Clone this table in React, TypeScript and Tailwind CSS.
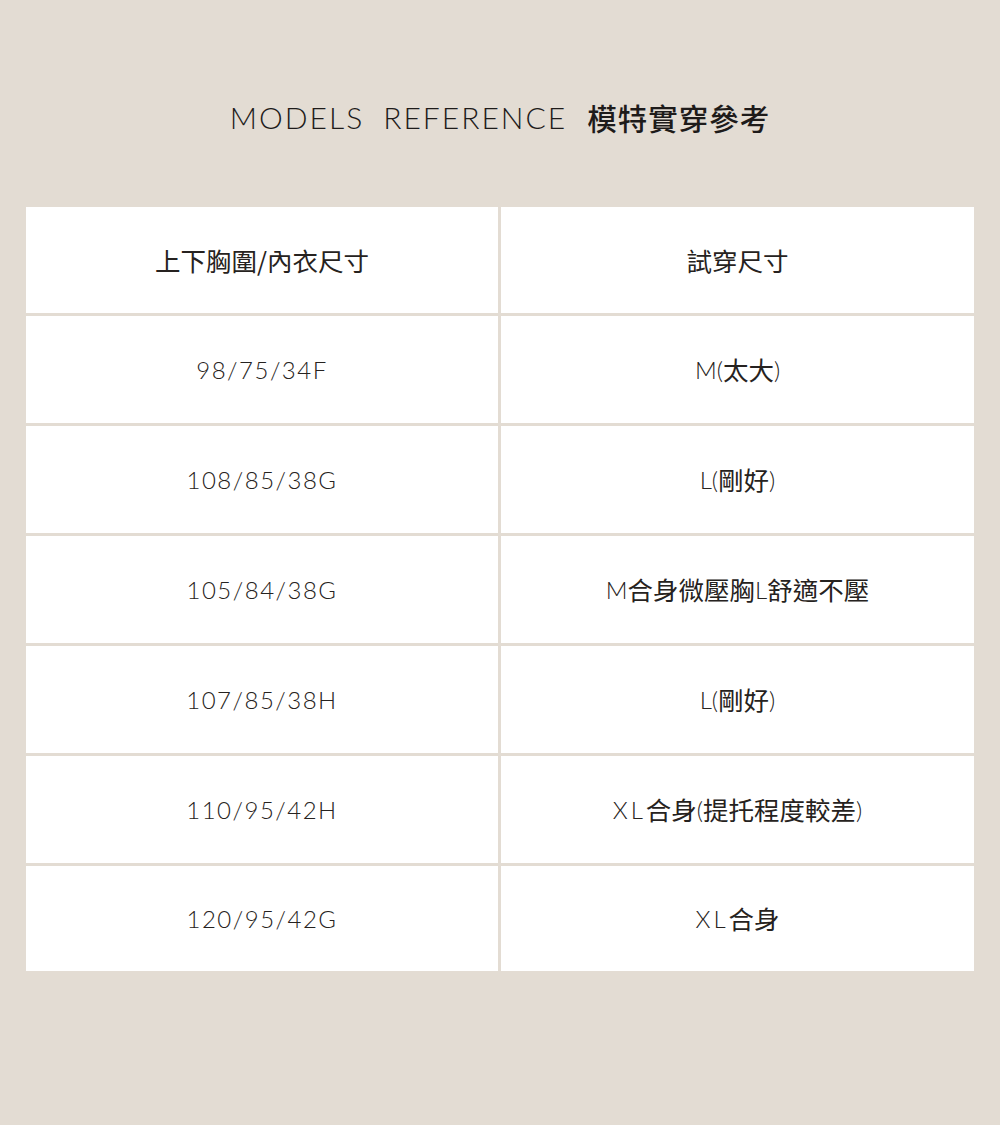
import React from "react";

const rows: [string, React.ReactNode][] = [
  ["98/75/34F", <><L>M(</L><C>太大</C><L>)</L></>],
  ["108/85/38G", <><L>L(</L><C>剛好</C><L>)</L></>],
  ["105/84/38G", <><L>M</L><C>合身微壓胸</C><L>L</L><C>舒適不壓</C></>],
  ["107/85/38H", <><L>L(</L><C>剛好</C><L>)</L></>],
  ["110/95/42H", <><L className="tracking-[3px]">XL</L><C>合身</C><L>(</L><C>提托程度較差</C><L>)</L></>],
  ["120/95/42G", <><L className="tracking-[3px]">XL</L><C>合身</C></>],
];

function L({ children, className = "" }: { children: React.ReactNode; className?: string }) {
  return (
    <span
      className={"font-light text-[24px] " + className}
      style={{ fontFamily: '"Lato", "Liberation Sans", sans-serif' }}
    >
      {children}
    </span>
  );
}

function C({ children }: { children: React.ReactNode }) {
  return (
    <span
      className="font-normal text-[25.5px]"
      style={{ fontFamily: '"Noto Sans CJK TC", "Noto Sans CJK SC", sans-serif' }}
    >
      {children}
    </span>
  );
}

export default function App() {
  return (
    <div className="w-[1000px] h-[1125px] bg-[#e3dcd3] text-[#262220]">
      <div className="h-[207px] flex justify-center items-start pt-[95px]">
        <div className="flex items-center gap-[20px]">
          <span
            className="text-[30px] font-light tracking-[2px] leading-[44px] text-[#1e1b1a]"
            style={{ fontFamily: '"Lato", "Liberation Sans", sans-serif' }}
          >
            MODELS<span className="ml-[19px]">REFERENCE</span>
          </span>
          <span
            className="text-[29.5px] font-medium leading-[44px] text-[#1e1b1a] tracking-[1px]"
            style={{ fontFamily: '"Noto Sans CJK TC", "Noto Sans CJK SC", sans-serif' }}
          >
            模特實穿參考
          </span>
        </div>
      </div>
      <div className="mx-[26px] grid grid-cols-[472px_473px] gap-x-[3px] gap-y-[3px]">
        <div className="h-[106px] bg-white flex items-center justify-center">
          <C>上下胸圍/內衣尺寸</C>
        </div>
        <div className="h-[106px] bg-white flex items-center justify-center">
          <C>試穿尺寸</C>
        </div>
        {rows.map(([a, b], i) => (
          <React.Fragment key={i}>
            <div className={(i === rows.length - 1 ? "h-[105px]" : "h-[107px]") + " bg-white flex items-center justify-center tracking-[1.5px]"}>
              <L>{a}</L>
            </div>
            <div className={(i === rows.length - 1 ? "h-[105px]" : "h-[107px]") + " bg-white flex items-center justify-center"}>
              {b}
            </div>
          </React.Fragment>
        ))}
      </div>
    </div>
  );
}
